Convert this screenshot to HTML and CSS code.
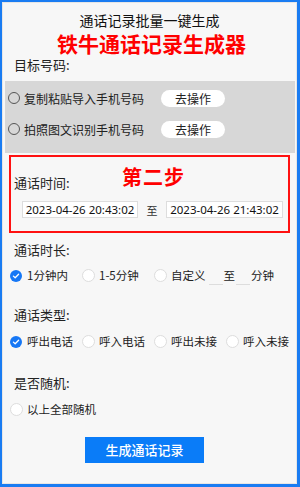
FILE: index.html
```html
<!DOCTYPE html>
<html lang="zh">
<head>
<meta charset="utf-8">
<link rel="stylesheet" href="styles.css">
</head>
<body>
<div class="frame">
  <div class="subtitle">通话记录批量一键生成</div>
  <div class="title">铁牛通话记录生成器</div>
  <div class="label first">目标号码:</div>
  <div class="graybox">
    <div class="grow">
      <span class="ring"></span><span class="gtext">复制粘贴导入手机号码</span>
      <span class="pill">去操作</span>
    </div>
    <div class="grow">
      <span class="ring"></span><span class="gtext">拍照图文识别手机号码</span>
      <span class="pill">去操作</span>
    </div>
  </div>
  <div class="redbox">
    <div class="step">第二步</div>
    <div class="label">通话时间:</div>
    <div class="timerow">
      <span class="tinput">2023-04-26 20:43:02</span>
      <span class="to">至</span>
      <span class="tinput">2023-04-26 21:43:02</span>
    </div>
  </div>
  <div class="label sec">通话时长:</div>
  <div class="opts o1">
    <span class="opt"><span class="radio on"><svg viewBox="0 0 12 12" width="12" height="12"><circle cx="6" cy="6" r="6" fill="#1677f5"/><path d="M3.4 6.1 5.2 7.8 8.6 4.3" fill="none" stroke="#fff" stroke-width="1.3" stroke-linecap="round" stroke-linejoin="round"/></svg></span>1分钟内</span>
    <span class="opt"><span class="radio"></span>1-5分钟</span>
    <span class="opt wide"><span class="radio"></span>自定义<span class="uline"></span>至<span class="uline"></span>分钟</span>
  </div>
  <div class="label sec2">通话类型:</div>
  <div class="opts o2">
    <span class="opt"><span class="radio on"><svg viewBox="0 0 12 12" width="12" height="12"><circle cx="6" cy="6" r="6" fill="#1677f5"/><path d="M3.4 6.1 5.2 7.8 8.6 4.3" fill="none" stroke="#fff" stroke-width="1.3" stroke-linecap="round" stroke-linejoin="round"/></svg></span>呼出电话</span>
    <span class="opt"><span class="radio"></span>呼入电话</span>
    <span class="opt"><span class="radio"></span>呼出未接</span>
    <span class="opt"><span class="radio"></span>呼入未接</span>
  </div>
  <div class="label sec3">是否随机:</div>
  <div class="opts o3">
    <span class="opt wide"><span class="radio"></span>以上全部随机</span>
  </div>
  <div class="btnwrap"><span class="btn">生成通话记录</span></div>
</div>
</body>
</html>
```

FILE: styles.css
```css
* { box-sizing: border-box; }
html, body { margin: 0; padding: 0; }
body {
  width: 300px;
  height: 487px;
  font-family: "Noto Sans CJK SC", "Noto Sans", sans-serif;
  color: #222;
  background: #1a7cf2;
}
.frame {
  width: 300px;
  height: 487px;
  border-style: solid;
  border-color: #1a7cf2;
  border-width: 2px 3px 3px 2px;
  background: #f7f7f7;
  box-shadow: inset 0 0 0 1px #e6e6e6;
  padding-top: 8px;
  overflow: hidden;
}
.subtitle {
  text-align: center;
  font-size: 14px;
  line-height: 21px;
  height: 21px;
  color: #111;
}
.title {
  text-align: center;
  font-size: 21px;
  line-height: 24px;
  height: 24px;
  font-weight: bold;
  color: #ff0000;
  padding-left: 4px;
}
.label {
  font-size: 13px;
  line-height: 18px;
  height: 18px;
  color: #222;
  padding-left: 12px;
}
.label.first { margin-top: 1px; }
.graybox {
  margin: 7px 2px 0 3px;
  height: 72px;
  background: #d7d7d7;
  padding: 8px 0 0 0;
  display: flex;
  flex-direction: column;
  gap: 13px;
}
.grow {
  display: flex;
  align-items: center;
  height: 18px;
  font-size: 12px;
  color: #222;
}
.ring {
  width: 12px;
  height: 12px;
  border: 1px solid #555;
  border-radius: 50%;
  margin-left: 3px;
  margin-right: 4px;
  flex: none;
}
.gtext { width: 118px; white-space: nowrap; }
.pill {
  margin-left: 19px;
  width: 64px;
  height: 17px;
  background: #fff;
  border-radius: 9px;
  text-align: center;
  font-size: 12px;
  line-height: 17px;
  color: #222;
}
.redbox {
  margin: 2px 7px 0 7px;
  height: 78px;
  border: 2px solid #ff1111;
  padding: 17px 0 0 0;
  position: relative;
}
.redbox .label { padding-left: 3px; }
.step {
  position: absolute;
  left: 111px;
  top: 8px;
  font-size: 20px;
  line-height: 24px;
  font-weight: bold;
  color: #ff0000;
  letter-spacing: 1px;
}
.timerow {
  display: flex;
  align-items: center;
  margin-top: 9px;
  padding-left: 11px;
}
.tinput {
  width: 116px;
  height: 17px;
  background: #fff;
  border: 1px solid #ddd;
  font-family: "Noto Sans", sans-serif;
  font-size: 11.5px;
  line-height: 15px;
  text-align: center;
  color: #111;
  flex: none;
}
.tinput + .to + .tinput { width: 117px; }
.to {
  width: 28px;
  text-align: center;
  font-size: 11px;
  color: #333;
}
.sec { margin-top: 8px; }
.sec2 { margin-top: 22px; }
.sec3 { margin-top: 24px; }
.opts {
  display: flex;
  align-items: center;
  height: 17px;
  padding-left: 8px;
  font-size: 11.5px;
  line-height: 17px;
  color: #222;
}
.o1 { margin-top: 8px; }
.o2 { margin-top: 9px; }
.o3 { margin-top: 9px; }
.opt {
  display: flex;
  align-items: center;
  width: 72px;
  white-space: nowrap;
  flex: none;
}
.opt.wide { width: auto; }
.radio {
  width: 13px;
  height: 13px;
  border: 1px solid #ddd;
  border-radius: 50%;
  background: #fff;
  margin-right: 4px;
  flex: none;
  display: flex;
  align-items: center;
  justify-content: center;
}
.radio.on { border: none; width: 12px; height: 12px; margin-right: 5px; }
.uline {
  display: inline-block;
  width: 14px;
  height: 1px;
  background: #ddd;
  align-self: flex-end;
  margin: 0 1px -1px 3px;
}
.uline + .uline { margin-left: 1px; }
.btnwrap {
  display: flex;
  padding-left: 83px;
  margin-top: 19px;
}
.btn {
  width: 119px;
  height: 26px;
  background: #0a7cf8;
  color: #fff;
  font-size: 13px;
  font-weight: 500;
  line-height: 26px;
  text-align: center;
}
```
